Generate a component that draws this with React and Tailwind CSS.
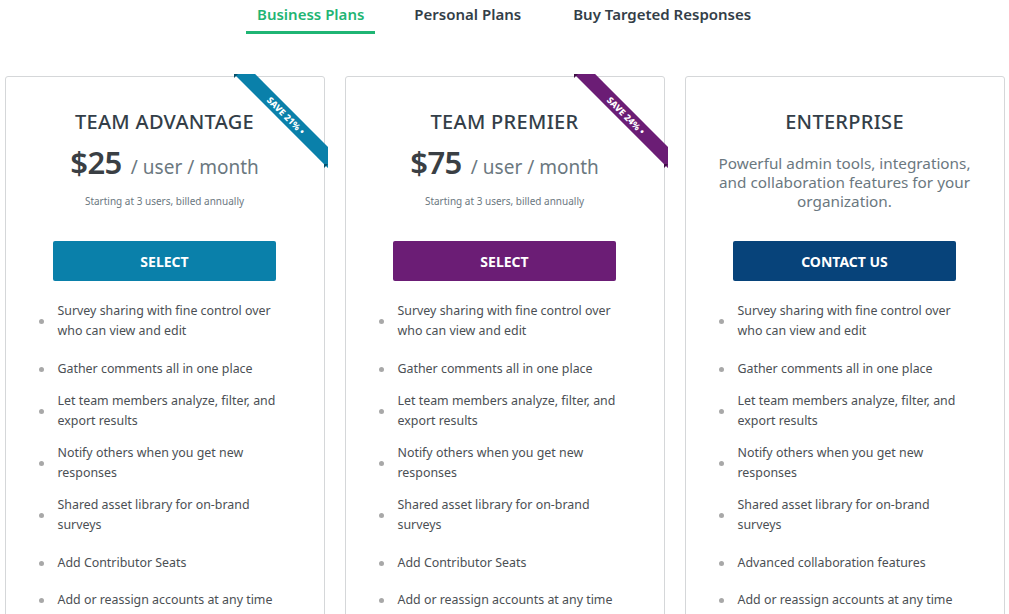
import React from "react";

const FONT = { fontFamily: '"Noto Sans", "Liberation Sans", sans-serif' };

function Ribbon({ label, color, dark }) {
  return (
    <div className="pointer-events-none absolute -right-[4px] -top-[3px] h-[94px] w-[94px] overflow-hidden">
      <div
        className="absolute left-[-18px] top-[34px] flex h-[15px] w-[140px] rotate-45 items-center justify-center text-[9px] font-extrabold uppercase tracking-[0px] text-white"
        style={{ backgroundColor: color }}
      >
        {label}
      </div>
      <div
        className="absolute left-0 top-0 h-0 w-0 border-r-[4px] border-t-[4px] border-r-transparent"
        style={{ borderTopColor: dark }}
      />
      <div
        className="absolute bottom-[0px] right-0 h-0 w-0 border-b-[4px] border-l-[4px] border-b-transparent"
        style={{ borderLeftColor: dark }}
      />
    </div>
  );
}

const baseFeatures = [
  { t: ["Survey sharing with fine control over", "who can view and edit"], mt: 0 },
  { t: ["Gather comments all in one place"], mt: 18 },
  { t: ["Let team members analyze, filter, and", "export results"], mt: 12 },
  { t: ["Notify others when you get new", "responses"], mt: 12 },
  { t: ["Shared asset library for on-brand", "surveys"], mt: 12 },
  { t: ["Add Contributor Seats"], mt: 18 },
  { t: ["Add or reassign accounts at any time"], mt: 17 },
];

function FeatureList({ sixth }) {
  const feats = baseFeatures.map((f, i) => (i === 5 ? { ...f, t: [sixth] } : f));
  return (
    <ul className="mt-[20px] pl-[33px] pr-4">
      {feats.map((f, i) => (
        <li key={i} className="flex items-center" style={{ marginTop: f.mt }}>
          <span className="mr-[14px] h-[5px] w-[5px] shrink-0 rounded-full bg-[#a8a8a8]" />
          <span className="text-[12.4px] leading-[20px] text-[#4b4f54]">
            {f.t.map((line, j) => (
              <span key={j} className="block">
                {line}
              </span>
            ))}
          </span>
        </li>
      ))}
    </ul>
  );
}

function PriceCard({ title, price, color, ribbon, ribbonDark, sixth }) {
  return (
    <div className="relative h-[560px] rounded-[3px] border border-[#d5d7d9] bg-white">
      <Ribbon label={ribbon} color={color} dark={ribbonDark} />
      <div className="flex flex-col items-center">
        <h2 className="mt-[32px] text-[20px] font-medium leading-[26px] tracking-[0.3px] text-[#333e48]">{title}</h2>
        <div className="mt-[7px] flex items-baseline">
          <span className="text-[31px] font-semibold leading-[40px] tracking-[-0.5px] text-[#3a3f44]">{price}</span>
          <span className="ml-[9px] text-[19px] leading-[26px] text-[#6b787f]">/ user / month</span>
        </div>
        <p className="mt-[12px] text-[10px] leading-[14px] text-[#6b787f]">Starting at 3 users, billed annually</p>
        <button
          className="mt-[33px] h-[40px] w-[223px] rounded-[2px] text-[14px] font-bold text-white"
          style={{ backgroundColor: color }}
        >
          SELECT
        </button>
      </div>
      <FeatureList sixth={sixth} />
    </div>
  );
}

function EnterpriseCard() {
  return (
    <div className="relative h-[560px] rounded-[3px] border border-[#d5d7d9] bg-white">
      <div className="flex flex-col items-center">
        <h2 className="mt-[32px] text-[20px] font-medium leading-[26px] tracking-[0.3px] text-[#333e48]">ENTERPRISE</h2>
        <p className="mt-[19px] w-[270px] text-center text-[15.3px] leading-[19px] text-[#6b787f]">
          Powerful admin tools, integrations, and collaboration features for your organization.
        </p>
        <button className="mt-[30px] h-[40px] w-[223px] rounded-[2px] bg-[#07437a] text-[14px] font-bold text-white">
          CONTACT US
        </button>
      </div>
      <FeatureList sixth="Advanced collaboration features" />
    </div>
  );
}

export default function App() {
  return (
    <div className="h-[614px] w-full overflow-hidden bg-white" style={FONT}>
      <nav className="flex pl-[246px]">
        <div className="mr-[29px] flex h-[34px] flex-col items-center justify-start">
          <span className="px-[11px] pt-[4px] text-[15px] font-semibold leading-[20px] text-[#1fb574]">Business Plans</span>
          <span className="mt-[7px] h-[3px] w-full bg-[#1fb574]" />
        </div>
        <div className="mr-[32px] px-[10px] pt-[4px] text-[15px] font-semibold leading-[20px] text-[#333e48]">Personal Plans</div>
        <div className="px-[10px] pt-[4px] text-[15px] font-semibold leading-[20px] text-[#333e48]">Buy Targeted Responses</div>
      </nav>
      <div className="mx-auto mt-[42px] grid w-[1000px] grid-cols-3 gap-[20px]">
        <PriceCard
          title="TEAM ADVANTAGE"
          price="$25"
          color="#0a80aa"
          ribbon="Save 21% •"
          ribbonDark="#05506b"
          sixth="Add Contributor Seats"
        />
        <PriceCard
          title="TEAM PREMIER"
          price="$75"
          color="#6b1d75"
          ribbon="Save 24% •"
          ribbonDark="#3f0f45"
          sixth="Add Contributor Seats"
        />
        <EnterpriseCard />
      </div>
    </div>
  );
}
